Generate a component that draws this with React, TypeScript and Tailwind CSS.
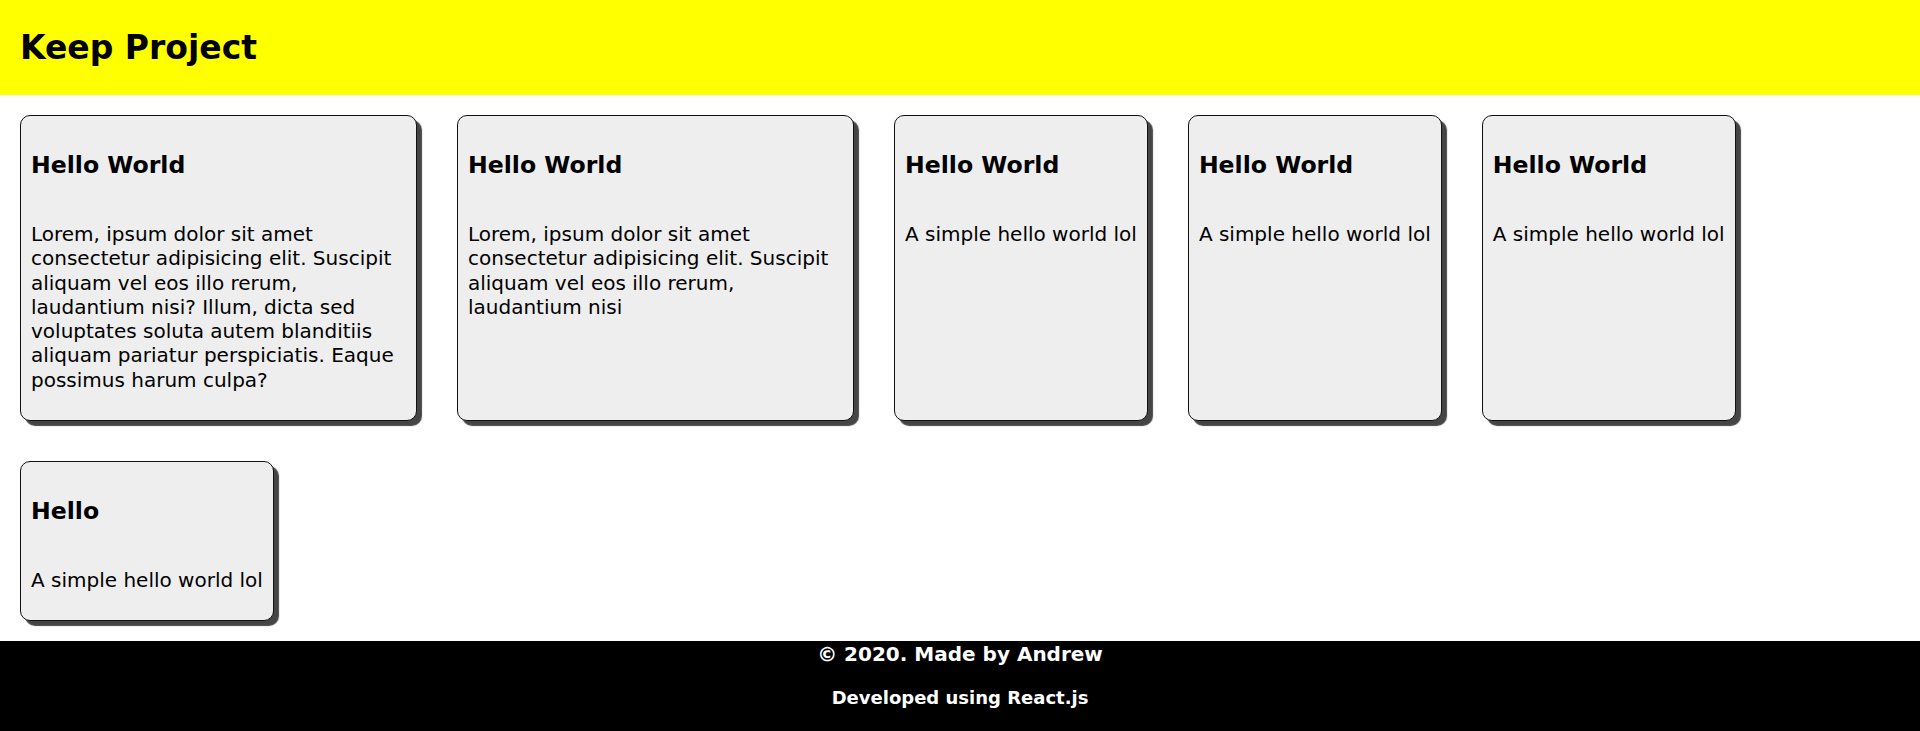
// App.tsx
const NOTES = [
  {
    title: 'Hello World',
    content:
      'Lorem, ipsum dolor sit amet consectetur adipisicing elit. Suscipit aliquam vel eos illo rerum, laudantium nisi? Illum, dicta sed voluptates soluta autem blanditiis aliquam pariatur perspiciatis. Eaque possimus harum culpa?',
  },
  {
    title: 'Hello World',
    content:
      'Lorem, ipsum dolor sit amet consectetur adipisicing elit. Suscipit aliquam vel eos illo rerum, laudantium nisi',
  },
  { title: 'Hello World', content: 'A simple hello world lol' },
  { title: 'Hello World', content: 'A simple hello world lol' },
  { title: 'Hello World', content: 'A simple hello world lol' },
  { title: 'Hello', content: 'A simple hello world lol' },
];

function Header() {
  return (
    <header className="h-[95px] bg-[#ffff00] flex items-center px-5">
      <h1 className="text-[33px] leading-[38px] font-bold text-black">Keep Project</h1>
    </header>
  );
}

function Note({ title, content }: { title: string; content: string }) {
  return (
    <div className="m-5 max-w-[397px] rounded-[10px] border border-[#111111] bg-[#eeeeee] p-[10px] shadow-[5px_5px_1px_#454545]">
      <h2 className="mt-[25px] text-[23.6px] leading-[28px] font-bold text-black">{title}</h2>
      <p className="mt-[43px] mb-[18px] text-[20px] leading-[24.3px] text-black">{content}</p>
    </div>
  );
}

function Footer() {
  return (
    <footer className="bg-black text-white text-center pt-[1px] pb-[24px]">
      <p className="text-[20px] leading-[24px] font-bold">© 2020. Made by Andrew</p>
      <p className="mt-[21px] text-[18px] leading-[22px] font-bold">Developed using React.js</p>
    </footer>
  );
}

export default function App() {
  return (
    <div className="min-h-screen bg-white font-['DejaVu_Sans',Verdana,sans-serif]">
      <Header />
      {/* notes grid */}
      <div className="flex flex-wrap">
        {NOTES.map((n, i) => (
          <Note key={i} title={n.title} content={n.content} />
        ))}
      </div>
      <Footer />
    </div>
  );
}
